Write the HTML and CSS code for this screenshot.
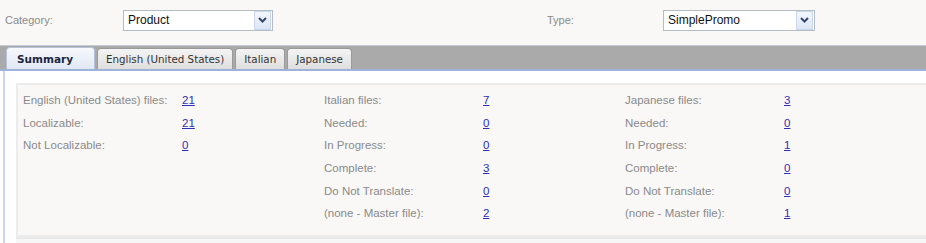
FILE: index.html
```html
<!DOCTYPE html>
<html lang="en">
<head>
    <meta charset="UTF-8">
    <title>Localization Summary</title>
    <link rel="stylesheet" href="styles.css">
</head>
<body>
    <div class="filters">
        <span class="filter-label">Category:</span>
        <div class="select">
            <span class="select-value">Product</span>
            <span class="select-arrow"><svg width="9" height="6" viewBox="0 0 9 6"><path d="M1 1 L4.5 4.5 L8 1" fill="none" stroke="#33466e" stroke-width="2"/></svg></span>
        </div>
        <span class="filter-label">Type:</span>
        <div class="select select-wide">
            <span class="select-value">SimplePromo</span>
            <span class="select-arrow"><svg width="9" height="6" viewBox="0 0 9 6"><path d="M1 1 L4.5 4.5 L8 1" fill="none" stroke="#33466e" stroke-width="2"/></svg></span>
        </div>
    </div>

    <div class="tabbar">
        <a class="tab active" href="#">Summary</a>
        <a class="tab" href="#">English (United States)</a>
        <a class="tab" href="#">Italian</a>
        <a class="tab" href="#">Japanese</a>
    </div>

    <div class="tab-content">
        <div class="panel">
            <div class="column">
                <div class="row"><span class="label">English (United States) files:</span><a href="#">21</a></div>
                <div class="row"><span class="label">Localizable:</span><a href="#">21</a></div>
                <div class="row"><span class="label">Not Localizable:</span><a href="#">0</a></div>
            </div>
            <div class="column">
                <div class="row"><span class="label">Italian files:</span><a href="#">7</a></div>
                <div class="row"><span class="label">Needed:</span><a href="#">0</a></div>
                <div class="row"><span class="label">In Progress:</span><a href="#">0</a></div>
                <div class="row"><span class="label">Complete:</span><a href="#">3</a></div>
                <div class="row"><span class="label">Do Not Translate:</span><a href="#">0</a></div>
                <div class="row"><span class="label">(none - Master file):</span><a href="#">2</a></div>
            </div>
            <div class="column">
                <div class="row"><span class="label">Japanese files:</span><a href="#">3</a></div>
                <div class="row"><span class="label">Needed:</span><a href="#">0</a></div>
                <div class="row"><span class="label">In Progress:</span><a href="#">1</a></div>
                <div class="row"><span class="label">Complete:</span><a href="#">0</a></div>
                <div class="row"><span class="label">Do Not Translate:</span><a href="#">0</a></div>
                <div class="row"><span class="label">(none - Master file):</span><a href="#">1</a></div>
            </div>
        </div>
        <div class="panel-next"></div>
    </div>
</body>
</html>
```

FILE: styles.css
```css
body {
    margin: 0;
    padding: 0;
    font-family: 'Liberation Sans', Arial, sans-serif;
    background-color: #fff;
    overflow: hidden;
}

.filters {
    display: grid;
    grid-template-columns: 118px 424px 116px 1fr;
    align-items: center;
    height: 45px;
    padding-left: 5px;
    background-color: #f9f8f6;
}

.filter-label {
    font-size: 11px;
    color: #8a8a8a;
    margin-top: -5px;
}

.select {
    display: flex;
    align-items: center;
    width: 148px;
    height: 19px;
    margin-top: -5px;
    border: 1px solid #b5bcc4;
    background-color: #fff;
}

.select-wide {
    width: 150px;
}

.select-value {
    flex: 1;
    padding-left: 4px;
    font-size: 12px;
    color: #111;
}

.select-arrow {
    display: flex;
    align-items: center;
    justify-content: center;
    width: 15px;
    height: 17px;
    margin-right: 1px;
    border: 1px solid #c9d6ec;
    background: linear-gradient(#f3f6fc, #dde6f6);
}

.tabbar {
    display: flex;
    align-items: flex-end;
    gap: 2px;
    height: 23px;
    padding-left: 6px;
    background-color: #aaaaaa;
    border-top: 1px solid #c4cad6;
    border-bottom: 2px solid #9fb2d9;
}

.tab {
    display: flex;
    align-items: center;
    height: 20px;
    padding: 0 8px;
    font-family: 'DejaVu Sans', Verdana, sans-serif;
    font-size: 10.3px;
    color: #333;
    text-decoration: none;
    background: linear-gradient(#f4f4f4, #dedede);
    border: 1px solid #9a9a9a;
    border-bottom: none;
    border-radius: 4px 4px 0 0;
}

.tab.active {
    height: 21px;
    padding: 0 21px 0 10px;
    font-size: 10.5px;
    font-weight: bold;
    color: #1b2740;
    background: linear-gradient(#f6f8fc, #e2e8f3);
    border-color: #b7c3da;
}

.tab-content {
    margin-left: 3px;
    padding: 12px 0 0 11px;
    border-left: 2px solid #ccd3f3;
}

.panel {
    display: flex;
    padding: 4px 0 10px 5px;
    background-color: #f9f8f7;
    border: 2px solid #ececec;
    border-right: none;
}

.column {
    width: 303.5px;
}

.row {
    display: flex;
    height: 22.6px;
    align-items: center;
    font-size: 11.5px;
}

.label {
    width: 159px;
    color: #8a8a8a;
}

.row a {
    color: #2e2eb8;
    text-decoration: underline;
}

.panel-next {
    height: 10px;
    background-color: #f6f6f6;
    border-top: 2px solid #e9e9e9;
}
```
